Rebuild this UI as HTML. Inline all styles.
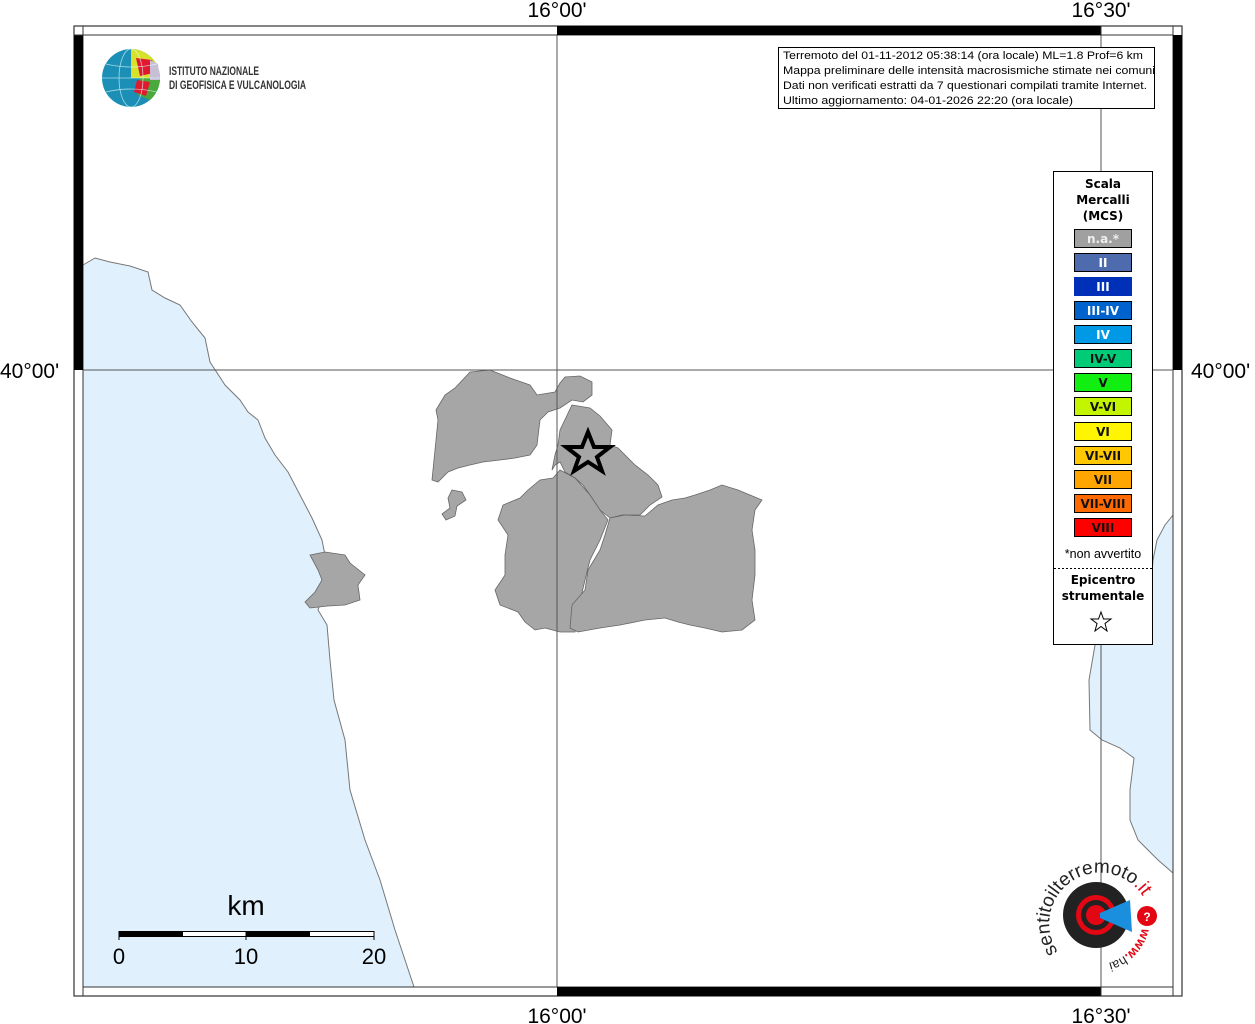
<!DOCTYPE html>
<html><head><meta charset="utf-8"><style>
html,body{margin:0;padding:0;background:#fff;}
svg{display:block;}
text{font-family:"Liberation Sans",sans-serif;}
.lg{font-family:"DejaVu Sans",sans-serif;font-weight:bold;font-size:12px;text-anchor:middle;}
</style></head><body>
<svg width="1255" height="1024" viewBox="0 0 1255 1024" xmlns="http://www.w3.org/2000/svg">
<!-- seas -->
<path d="M83,265 L95,258 L110,262 L130,266 L148,272 L152,290 L165,298 L180,305 L192,322 L205,338 L210,362 L225,385 L240,400 L248,412 L258,420 L265,438 L275,455 L288,472 L300,495 L312,518 L322,540 L326,560 L330,582 L322,598 L318,610 L327,625 L330,660 L334,700 L345,740 L350,790 L365,840 L380,880 L395,930 L414,987 L83,987 Z" fill="#e0f1fd" stroke="#777" stroke-width="1"/>
<path d="M1173,515 L1165,525 L1157,540 L1153,560 L1150,600 L1095,645 L1089,680 L1090,730 L1102,740 L1120,748 L1134,758 L1130,790 L1130,820 L1138,840 L1158,860 L1173,873 Z" fill="#e0f1fd" stroke="#777" stroke-width="1"/>
<!-- municipalities -->
<g fill="#a6a6a6" stroke="#666" stroke-width="0.8">
<path d="M470,372 L490,370 L510,378 L530,385 L537,395 L555,392 L560,383 L565,377 L580,376 L592,382 L592,395 L583,402 L572,400 L560,408 L548,412 L540,420 L537,445 L530,455 L515,458 L500,460 L483,462 L470,465 L458,468 L448,472 L438,482 L432,480 L434,460 L436,440 L438,420 L436,410 L445,395 L455,388 Z"/>
<path d="M572,405 L590,408 L600,416 L612,430 L610,445 L618,448 L635,465 L648,475 L658,485 L662,497 L650,505 L640,515 L622,515 L610,518 L600,510 L590,495 L583,485 L575,478 L565,472 L560,462 L555,465 L552,470 L555,455 L558,445 L560,430 Z"/>
<path d="M452,490 L462,492 L466,500 L457,506 L455,516 L446,520 L442,514 L450,508 L448,498 Z"/>
<path d="M560,470 L575,478 L590,495 L600,510 L608,520 L600,540 L590,560 L585,580 L578,610 L575,632 L560,632 L545,628 L535,630 L525,622 L518,612 L500,605 L495,590 L505,575 L505,555 L508,535 L498,520 L503,505 L520,498 L528,490 L540,480 L553,478 Z"/>
<path d="M610,518 L625,515 L645,516 L658,505 L672,500 L685,498 L695,495 L710,490 L722,485 L738,490 L750,495 L762,500 L755,510 L752,530 L755,550 L755,575 L752,600 L755,620 L742,630 L722,632 L705,628 L690,625 L678,622 L665,618 L645,620 L620,625 L600,628 L578,632 L570,628 L572,605 L585,590 L588,570 L600,550 L605,535 Z"/>
<path d="M310,555 L325,552 L345,555 L350,563 L365,575 L358,585 L360,600 L345,605 L328,606 L310,608 L305,602 L315,592 L322,580 L318,570 Z"/>
</g>
<!-- grid lines -->
<g stroke="#555" stroke-width="1">
<line x1="557" y1="35" x2="557" y2="987"/>
<line x1="1101" y1="35" x2="1101" y2="987"/>
<line x1="83" y1="370" x2="1173" y2="370"/>
</g>
<!-- frame -->
<rect x="74" y="26" width="1108" height="970" fill="none" stroke="#333" stroke-width="1.2"/>
<rect x="83" y="35" width="1090" height="952" fill="none" stroke="#333" stroke-width="1"/>
<rect x="557" y="26" width="544" height="9" fill="#000"/>
<rect x="557" y="987" width="544" height="9" fill="#000"/>
<rect x="74" y="35" width="9" height="335" fill="#000"/>
<rect x="1173" y="35" width="9" height="335" fill="#000"/>
<g stroke="#333" stroke-width="1">
<line x1="74" y1="35" x2="83" y2="35"/><line x1="83" y1="26" x2="83" y2="35"/>
<line x1="1173" y1="26" x2="1173" y2="35"/><line x1="1173" y1="987" x2="1173" y2="996"/>
<line x1="83" y1="987" x2="83" y2="996"/>
<line x1="1101" y1="26" x2="1101" y2="35"/><line x1="1101" y1="987" x2="1101" y2="996"/>
</g>
<!-- axis labels -->
<g font-size="21" fill="#000">
<text x="557" y="17" text-anchor="middle">16°00'</text>
<text x="1101" y="17" text-anchor="middle">16°30'</text>
<text x="557" y="1023" text-anchor="middle">16°00'</text>
<text x="1101" y="1023" text-anchor="middle">16°30'</text>
<text x="0" y="378">40°00'</text>
<text x="1191" y="378">40°00'</text>
</g>
<!-- star -->
<polygon points="588,432 594,447 610,447 597,457 602,471 588,462 574,471 579,457 566,447 582,447" fill="none" stroke="#000" stroke-width="4" stroke-linejoin="miter"/>
<!-- INGV logo -->
<circle cx="131" cy="78" r="29" fill="#1c8fb7"/>
<path d="M131,49 A29,29 0 0 1 160,78 L131,78 Z" fill="#d8e22b"/>
<path d="M136,58 L152,60 L158,72 L140,76 Z" fill="#e0192f"/>
<path d="M140,78 L160,78 A29,29 0 0 1 150,100 L138,95 Z" fill="#4aa83c"/>
<path d="M137,80 L150,82 L146,96 L134,92 Z" fill="#e0192f"/>
<path d="M150,60 L158,64 L160,80 L150,80 Z" fill="#c8bfd6"/>
<g stroke="#dff" stroke-width="0.8" fill="none" opacity="0.7">
<ellipse cx="131" cy="78" rx="12" ry="29"/><line x1="102" y1="78" x2="160" y2="78"/><path d="M106,64 Q131,70 157,64"/><path d="M106,92 Q131,86 157,92"/>
</g>
<text x="169" y="75" font-size="12" font-weight="bold" fill="#333" textLength="90" lengthAdjust="spacingAndGlyphs">ISTITUTO NAZIONALE</text>
<text x="169" y="89" font-size="12" font-weight="bold" fill="#333" textLength="137" lengthAdjust="spacingAndGlyphs">DI GEOFISICA E VULCANOLOGIA</text>
<!-- info box -->
<rect x="778.5" y="47.5" width="376" height="61" fill="#fff" stroke="#000"/>
<g font-size="11" fill="#000">
<text x="783" y="59" textLength="360" lengthAdjust="spacingAndGlyphs">Terremoto del 01-11-2012 05:38:14 (ora locale) ML=1.8 Prof=6 km</text>
<text x="783" y="74" textLength="372" lengthAdjust="spacingAndGlyphs">Mappa preliminare delle intensità macrosismiche stimate nei comuni</text>
<text x="783" y="89" textLength="364" lengthAdjust="spacingAndGlyphs">Dati non verificati estratti da 7 questionari compilati tramite Internet.</text>
<text x="783" y="104" textLength="290" lengthAdjust="spacingAndGlyphs">Ultimo aggiornamento: 04-01-2026 22:20 (ora locale)</text>
</g>
<!-- legend -->
<rect x="1053.5" y="171.5" width="99" height="473" fill="#fff" stroke="#000"/>
<text class="lg" x="1103" y="188">Scala</text>
<text class="lg" x="1103" y="204">Mercalli</text>
<text class="lg" x="1103" y="220">(MCS)</text>
<g stroke="#000" stroke-width="1">
<rect x="1074.5" y="229.5" width="57" height="18" fill="#a0a0a0"/>
<rect x="1074.5" y="253.5" width="57" height="18" fill="#4e6cad"/>
<rect x="1074.5" y="277.5" width="57" height="18" fill="#0030b8" stroke="#0030b8"/>
<rect x="1074.5" y="301.5" width="57" height="18" fill="#0062cc"/>
<rect x="1074.5" y="325.5" width="57" height="18" fill="#0099e6"/>
<rect x="1074.5" y="349.5" width="57" height="18" fill="#00cc77"/>
<rect x="1074.5" y="373.5" width="57" height="18" fill="#11ee11"/>
<rect x="1074.5" y="397.5" width="57" height="18" fill="#c4f500"/>
<rect x="1074.5" y="422.5" width="57" height="18" fill="#fff500"/>
<rect x="1074.5" y="446.5" width="57" height="18" fill="#ffc800"/>
<rect x="1074.5" y="470.5" width="57" height="18" fill="#ffa500"/>
<rect x="1074.5" y="494.5" width="57" height="18" fill="#ff6a00"/>
<rect x="1074.5" y="518.5" width="57" height="18" fill="#ff0000"/>
</g>
<text class="lg" x="1103" y="243" fill="#eee">n.a.*</text>
<text class="lg" x="1103" y="267" fill="#fff">II</text>
<text class="lg" x="1103" y="291" fill="#fff">III</text>
<text class="lg" x="1103" y="315" fill="#fff">III-IV</text>
<text class="lg" x="1103" y="339" fill="#fff">IV</text>
<text class="lg" x="1103" y="363" fill="#111">IV-V</text>
<text class="lg" x="1103" y="387" fill="#111">V</text>
<text class="lg" x="1103" y="411" fill="#111">V-VI</text>
<text class="lg" x="1103" y="436" fill="#111">VI</text>
<text class="lg" x="1103" y="460" fill="#111">VI-VII</text>
<text class="lg" x="1103" y="484" fill="#111">VII</text>
<text class="lg" x="1103" y="508" fill="#111">VII-VIII</text>
<text class="lg" x="1103" y="532" fill="#111">VIII</text>
<text x="1103" y="558" font-size="12.5" text-anchor="middle" font-family="DejaVu Sans,sans-serif">*non avvertito</text>
<line x1="1054" y1="568.5" x2="1152" y2="568.5" stroke="#000" stroke-dasharray="2,2"/>
<text class="lg" x="1103" y="584">Epicentro</text>
<text class="lg" x="1103" y="600">strumentale</text>
<polygon points="1101,612 1103.5,619 1111,619 1105,623.5 1107,631 1101,626.5 1095,631 1097,623.5 1091,619 1098.5,619" fill="#fff" stroke="#000" stroke-width="1"/>
<!-- scale bar -->
<text x="246" y="915" font-size="28" text-anchor="middle" fill="#000">km</text>
<rect x="119" y="931.5" width="255" height="5" fill="#fff" stroke="#000"/>
<rect x="119" y="931.5" width="64" height="5" fill="#000"/>
<rect x="246" y="931.5" width="64" height="5" fill="#000"/>
<g stroke="#000"><line x1="119" y1="931" x2="119" y2="940"/><line x1="246" y1="931" x2="246" y2="940"/><line x1="374" y1="931" x2="374" y2="940"/></g>
<g font-size="22" fill="#000" text-anchor="middle">
<text x="119" y="964">0</text><text x="246" y="964">10</text><text x="374" y="964">20</text>
</g>
<!-- haisentito logo -->
<circle cx="1096" cy="915" r="33" fill="#222"/>
<circle cx="1096" cy="915" r="20" fill="#e30613"/>
<circle cx="1096" cy="915" r="15" fill="#222"/>
<circle cx="1096" cy="915" r="10" fill="#e30613"/>
<path d="M1100,913 L1130,900 L1132,932 L1100,918 Z" fill="#1a8fde"/>
<circle cx="1147" cy="916" r="10" fill="#e30613"/>
<text x="1147" y="921" font-size="12" fill="#fff" text-anchor="middle" font-weight="bold">?</text>
<path id="arc" d="M1058,952 A46,46 0 1 1 1142,895" fill="none"/>
<text font-size="19" fill="#222"><textPath href="#arc">sentitoilterremoto<tspan fill="#e30613">.it</tspan></textPath></text>
<path id="arc2" d="M1142,928 A46,46 0 0 1 1092,964" fill="none"/>
<text font-size="13" fill="#e30613" font-weight="bold"><textPath href="#arc2">www.<tspan fill="#222" font-weight="normal">hai</tspan></textPath></text>
</svg>
</body></html>
